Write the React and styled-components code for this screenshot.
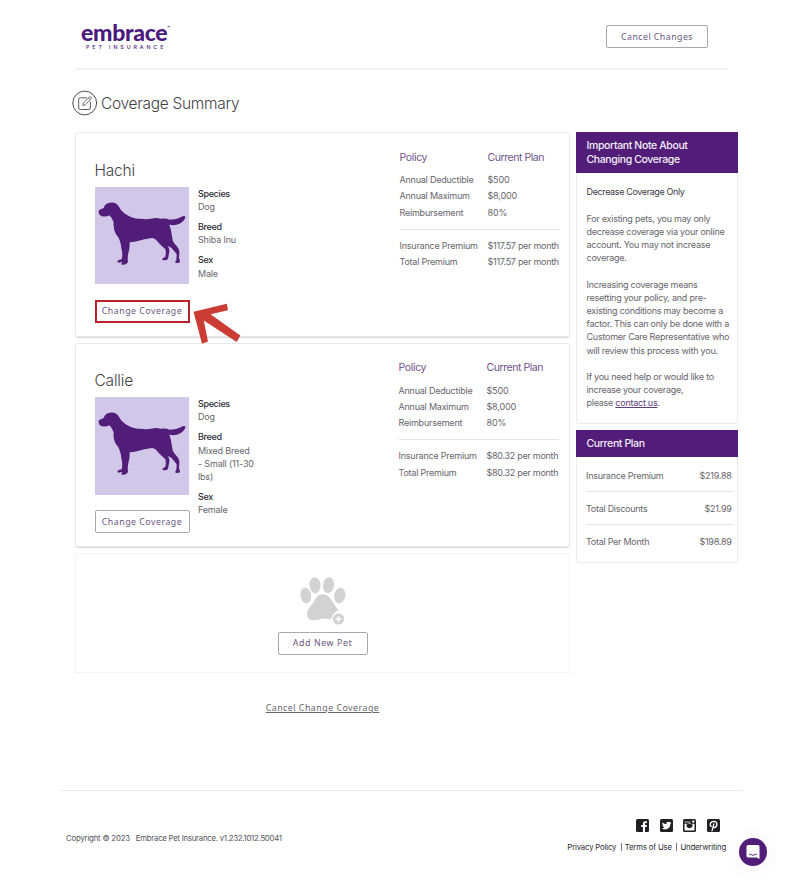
import React from 'react'
import styled, { createGlobalStyle } from 'styled-components'

const GlobalStyle = createGlobalStyle`
  * {
    box-sizing: border-box;
  }

  body {
    margin: 0;
    background: #fff;
    color: #67666b;
    font-family: Inter, "Liberation Sans", sans-serif;
    font-size: 9px;
    font-weight: 370;
    line-height: 13.2px;
    letter-spacing: -0.17px;
  }

  h1, h2, h3, p, dl, dd, dt {
    margin: 0;
    font-weight: inherit;
  }
`

const Page = styled.div`
  position: relative;
  height: 891px;
  overflow: hidden;
`

const Header = styled.header`
  display: flex;
  justify-content: space-between;
  align-items: flex-start;
  width: 653px;
  height: 70px;
  margin-left: 75px;
  padding: 21px 20px 0 6px;
  border-bottom: 2px solid #f3f3f4;
`

const Logo = styled.div`
  display: flex;
  flex-direction: column;
  color: #4b1a7c;
`

const LogoName = styled.div`
  display: flex;
  height: 22px;
  font-family: Lato, sans-serif;
  font-size: 23px;
  font-weight: 900;
  line-height: 22px;
  letter-spacing: -0.3px;

  sup {
    font-size: 4px;
    line-height: 14px;
    letter-spacing: 0;
  }
`

const LogoTag = styled.div`
  padding-left: 5px;
  font-size: 5.3px;
  font-weight: 500;
  line-height: 9px;
  letter-spacing: 2.9px;
`

const Button = styled.button`
  width: ${props => props.$width}px;
  height: 23px;
  flex-shrink: 0;
  margin: 0;
  padding: 1px 0 0;
  border: ${props => props.$marked ? '2px solid #b9222b' : '1px solid #aaa6b2'};
  border-radius: ${props => props.$marked ? 0 : 2}px;
  background: #fff;
  color: #6a5880;
  font-family: "Noto Sans", sans-serif;
  font-size: 8.8px;
  line-height: 1;
  letter-spacing: ${props => props.$spacing || 0.5}px;
  white-space: nowrap;
`

const HeaderButton = styled(Button)`
  margin-top: 4px;
`

const Title = styled.div`
  display: flex;
  align-items: center;
  gap: 3px;
  height: 26px;
  margin: 20px 0 16px 72px;
  color: #434247;

  h1 {
    padding-top: 1px;
    font-size: 15.5px;
    font-weight: 300;
    line-height: 20px;
    letter-spacing: -0.3px;
  }
`

const Main = styled.main`
  display: flex;
  align-items: flex-start;
  gap: 6px;
  margin-left: 75px;
`

const Pets = styled.div`
  display: flex;
  flex-direction: column;
  gap: 6px;
  width: 495px;
`

const Card = styled.section`
  display: flex;
  justify-content: space-between;
  height: 204.5px;
  padding: 17.5px 10px 0 18.5px;
  border: 1px solid #e9e9ea;
  border-radius: 3px;
  box-shadow: 0 1px 1px #d8d8da;
`

const PetSide = styled.div`
  display: flex;
  flex-direction: column;
  width: 170px;

  h2 {
    margin-top: 9px;
    color: #46454a;
    font-size: 15.5px;
    font-weight: 300;
    line-height: 21px;
    letter-spacing: -0.2px;
  }
`

const PetInfo = styled.div`
  display: flex;
  gap: 9px;
  height: 97.5px;
  margin: 6px 0 15.5px;
`

const Portrait = styled.div`
  width: 94px;
  height: 97.5px;
  background: #d1c7e8;

  svg {
    display: block;
  }
`

const Facts = styled.dl`
  display: flex;
  flex-direction: column;
  gap: 7px;
  width: 57px;
  padding-left: 0.5px;

  dt {
    color: #2f2e33;
    font-weight: 450;
    letter-spacing: -0.35px;
  }
`

const Policy = styled.div`
  display: flex;
  flex-direction: column;
  width: ${props => props.$width}px;
  height: 120px;
`

const PolicyRow = styled.div`
  display: grid;
  grid-template-columns: 88px 1fr;
  line-height: 16.2px;
  white-space: nowrap;
  letter-spacing: -0.22px;

  span + span {
    letter-spacing: ${props => props.$spacing || -0.15}px;
  }
`

const PolicyHead = styled(PolicyRow)`
  margin: -1px 0 6.5px;
  color: #6f528a;
  font-size: 10.5px;
  letter-spacing: -0.35px;
`

const Line = styled.div`
  height: 1px;
  margin: ${props => props.$gap}px 0;
  background: #e3e3e5;
`

const AddCard = styled.section`
  display: flex;
  flex-direction: column;
  align-items: center;
  gap: 6px;
  height: 120px;
  padding-top: 21.5px;
  border: 1px solid #f3f3f4;
`

const CancelLink = styled.a`
  align-self: center;
  margin-top: 22.5px;
  font-family: "Noto Sans", sans-serif;
  font-size: 8.8px;
  letter-spacing: 0.5px;
  text-decoration: underline;
`

const Sidebar = styled.aside`
  display: flex;
  flex-direction: column;
  gap: 6px;
  width: 161.5px;
`

const Panel = styled.section`
  height: ${props => props.$height}px;
  border: 1px solid #ededee;
  border-top: 0;
  border-radius: 0 0 3px 3px;

  h3 {
    margin: 0 -1px;
    padding: 6.5px 10.5px 5.5px;
    background: #511d78;
    color: #f4eef9;
    font-size: 10.5px;
    font-weight: 550;
    line-height: 14.6px;
    letter-spacing: -0.37px;
  }
`

const Note = styled.div`
  display: flex;
  flex-direction: column;
  gap: 13.2px;
  padding: 12px 0 0 9.5px;
  white-space: nowrap;
  letter-spacing: -0.25px;

  strong {
    color: #3b3a3f;
    font-weight: 420;
    letter-spacing: -0.37px;
  }

  a {
    color: #60407c;
    text-decoration: underline;
  }
`

const Totals = styled.div`
  padding: 12px 5px 0 9px;
`

const TotalRow = styled.div`
  display: flex;
  justify-content: space-between;
  letter-spacing: -0.27px;
`

const Footer = styled.footer`
  display: flex;
  justify-content: space-between;
  width: 683px;
  margin: 75.5px 0 0 60px;
  padding: 28px 17px 0 6px;
  border-top: 1px solid #ebebec;
  color: #55545a;
  font-size: 7.8px;
  line-height: 12px;
`

const Copyright = styled.div`
  display: flex;
  gap: 6px;
  padding-top: 12.5px;
  letter-spacing: -0.2px;

  span + span {
    letter-spacing: -0.26px;
  }
`

const FooterRight = styled.div`
  display: flex;
  flex-direction: column;
  align-items: flex-end;
  gap: 9px;
`

const Social = styled.div`
  display: flex;
  gap: 10.5px;
  height: 13px;
  padding-right: 6.5px;
`

const Links = styled.div`
  display: flex;
  gap: 4.5px;
  color: #2f2e33;
  white-space: nowrap;
  letter-spacing: -0.19px;

  span + span {
    padding-left: 4px;
    background: linear-gradient(#77767b, #77767b) 0 2px / 1px 8px no-repeat;
  }
`

const Chat = styled.div`
  position: absolute;
  left: 739px;
  top: 838px;
  display: flex;
  align-items: center;
  justify-content: center;
  width: 28px;
  height: 28px;
  border-radius: 50%;
  background: #511d78;
  box-shadow: 0 1px 20px 4px rgba(0, 0, 0, 0.035);
`

const Arrow = styled.svg`
  position: absolute;
  left: 190px;
  top: 300px;
`

const EditIcon = () => (
  <svg width="26" height="26" viewBox="0 0 26 26" fill="none" stroke="#4c4b50">
    <circle cx="12.7" cy="13" r="11.9" strokeWidth="1" />
    <path d="M14.8 7.8H8.2q-1.5 0-1.5 1.5v8.7q0 1.5 1.5 1.5h8.7q1.5 0 1.5-1.5v-6.2" strokeWidth=".9" />
    <path d="M10.8 15.7l.8-2.9 5.6-5.8q.8-.7 1.7.1t.1 1.7l-5.5 5.9zM16.3 8l1.8 1.7" strokeWidth=".8" />
  </svg>
)

const Dog = () => (
  <svg width="94" height="97.5" viewBox="75 185 282 291" preserveAspectRatio="none" fill="#511d78">
    <path d="M86 255Q94 251 101 248Q105 232 124 231Q140 231 147 244Q153 259 174 270Q190 280 213 280Q229 283 251 278Q262 276 272 280Q287 277 299 283Q318 283 332 275Q345 268 346 275Q344 285 330 294Q316 302 298 298Q304 313 306 333Q306 346 315 356Q330 370 328 383L327 397Q332 408 328 411L318 412Q313 409 319 403L320 386Q313 376 304 366L293 361Q301 371 297 383L294 399Q290 405 279 403Q274 400 280 397L286 393Q289 380 286 371Q269 357 257 342Q250 335 241 338Q219 341 201 347Q187 350 179 350Q180 367 175 382Q172 397 174 409Q169 419 155 416Q152 412 158 408L145 411Q139 407 146 403L155 401Q159 387 154 367Q151 339 138 326Q129 310 131 290Q127 277 118 269Q109 275 96 272Q85 270 86 255Z" />
  </svg>
)

const Paw = () => (
  <svg width="50" height="50" viewBox="0 0 50 50" fill="#d2d2d3">
    <ellipse cx="7.8" cy="19.5" rx="5.3" ry="7.8" transform="rotate(-8 7.8 19.5)" />
    <ellipse cx="17" cy="9.2" rx="5.5" ry="8" transform="rotate(-5 17 9.2)" />
    <ellipse cx="30.5" cy="9.2" rx="5.5" ry="8" transform="rotate(8 30.5 9.2)" />
    <ellipse cx="41.8" cy="19.5" rx="5.6" ry="7.8" transform="rotate(10 41.8 19.5)" />
    <path d="M24.7 18.3Q30 18.3 33.5 24.5Q36 28 40.5 34.5Q34.5 36.5 33 43.5Q29 42 24.7 42.6Q17.5 44.8 13 44Q7.5 42 9.500 35Q11 31 15.2 27Q18.5 18.3 24.7 18.3Z" />
    <circle cx="40.5" cy="43" r="5.6" />
    <path d="M40.5 40v6M37.5 43h6" stroke="#fff" strokeWidth="1.5" />
  </svg>
)

const Facebook = () => (
  <svg width="13" height="13" viewBox="0 0 13 13">
    <rect width="13" height="13" rx="1.5" fill="#202024" />
    <path d="M6.9 13V8H5.2V6h1.7V4.6Q6.9 2.2 9.3 2.2h1.6v1.9H9.8Q9 4.1 9 4.9V6h1.900l-.3 2H9v5z" fill="#fff" />
  </svg>
)

const Twitter = () => (
  <svg width="13" height="13" viewBox="0 0 13 13">
    <rect width="13" height="13" rx="1.5" fill="#202024" />
    <path d="M2.4 3.200Q4 5 6.4 5.1Q6.2 2.7 8.3 2.7Q9.2 2.7 9.8 3.3L11 2.9L10.4 4L11.3 3.9L10.5 4.8Q10.4 8.4 7.7 9.8Q4.7 11 2 9.4Q3.7 9.4 4.6 8.6Q3.3 8.3 2.9 7.2H3.7Q2.3 6.5 2.3 5.2L3 5.4Q1.9 4.4 2.4 3.2Z" fill="#fff" />
  </svg>
)

const Instagram = () => (
  <svg width="13" height="13" viewBox="0 0 13 13">
    <rect width="13" height="13" rx="1.5" fill="#202024" />
    <path d="M1.5 4.8H3.7Q2.7 9 6.5 9.2Q10.3 9 9.3 4.8H11.5V10.7Q11.5 11.5 10.7 11.5H2.3Q1.5 11.5 1.5 10.7Z" fill="#fff" />
    <path d="M1.5 3h6" fill="none" stroke="#fff" strokeWidth=".7" />
    <path d="M4.5 5.2Q5.2 4.400 6.5 4.4t2 .8" fill="none" stroke="#fff" strokeWidth=".6" />
    <rect x="9.2" y="1.5" width="2.2" height="2" fill="#fff" />
  </svg>
)

const Pinterest = () => (
  <svg width="13" height="13" viewBox="0 0 13 13">
    <rect width="13" height="13" rx="1.5" fill="#202024" />
    <path d="M4.2 7.5Q2.9 6.6 3.3 4.7Q4 2.4 6.8 2.4Q9.9 2.5 9.9 5.1Q9.7 8.2 7.6 8.5Q6.6 8.6 6.2 7.9M6.9 4.8L5 11.8" fill="none" stroke="#fff" strokeWidth="1.3" strokeLinecap="round" />
  </svg>
)

const pets = [
  {
    name: 'Hachi',
    breed: 'Shiba Inu',
    sex: 'Male',
    premium: '$117.57 per month',
    width: 159.5,
    marked: true
  },
  {
    name: 'Callie',
    breed: 'Mixed Breed - Small (11-30 lbs)',
    sex: 'Female',
    premium: '$80.32 per month',
    width: 160.5,
    marked: false
  }
]

const PetCard = ({ pet }) => (
  <Card>
    <PetSide>
      <h2>{pet.name}</h2>
      <PetInfo>
        <Portrait><Dog /></Portrait>
        <Facts>
          <div><dt>Species</dt><dd>Dog</dd></div>
          <div><dt>Breed</dt><dd>{pet.breed}</dd></div>
          <div><dt>Sex</dt><dd>{pet.sex}</dd></div>
        </Facts>
      </PetInfo>
      <Button $width={95} $marked={pet.marked}>Change Coverage</Button>
    </PetSide>
    <Policy $width={pet.width}>
      <PolicyHead $spacing={-0.45}><span>Policy</span><span>Current Plan</span></PolicyHead>
      <PolicyRow><span>Annual Deductible</span><span>$500</span></PolicyRow>
      <PolicyRow><span>Annual Maximum</span><span>$8,000</span></PolicyRow>
      <PolicyRow><span>Reimbursement</span><span>80%</span></PolicyRow>
      <Line $gap={8} />
      <PolicyRow $spacing={-0.28}><span>Insurance Premium</span><span>{pet.premium}</span></PolicyRow>
      <PolicyRow $spacing={-0.28}><span>Total Premium</span><span>{pet.premium}</span></PolicyRow>
    </Policy>
  </Card>
)

const App = () => {
  return (
    <Page>
      <GlobalStyle />
      <Header>
        <Logo>
          <LogoName>embrace<sup>™</sup></LogoName>
          <LogoTag>PET INSURANCE</LogoTag>
        </Logo>
        <HeaderButton $width={102} $spacing={0.45}>Cancel Changes</HeaderButton>
      </Header>
      <Title>
        <EditIcon />
        <h1>Coverage Summary</h1>
      </Title>
      <Main>
        <Pets>
          {pets.map(pet => <PetCard key={pet.name} pet={pet} />)}
          <AddCard>
            <Paw />
            <Button $width={90} $spacing={0.6}>Add New Pet</Button>
          </AddCard>
          <CancelLink>Cancel Change Coverage</CancelLink>
        </Pets>
        <Sidebar>
          <Panel $height={292}>
            <h3>Important Note About<br />Changing Coverage</h3>
            <Note>
              <strong>Decrease Coverage Only</strong>
              <p>For existing pets, you may only<br />decrease coverage via your online<br />account. You may not increase<br />coverage.</p>
              <p>Increasing coverage means<br />resetting your policy, and pre-<br />existing conditions may become a<br />factor. This can only be done with a<br />Customer Care Representative who<br />will review this process with you.</p>
              <p>If you need help or would like to<br />increase your coverage,<br />please <a>contact us</a>.</p>
            </Note>
          </Panel>
          <Panel $height={132.5}>
            <h3>Current Plan</h3>
            <Totals>
              <TotalRow><span>Insurance Premium</span><span>$219.88</span></TotalRow>
              <Line $gap={9.4} />
              <TotalRow><span>Total Discounts</span><span>$21.99</span></TotalRow>
              <Line $gap={9.4} />
              <TotalRow><span>Total Per Month</span><span>$198.89</span></TotalRow>
            </Totals>
          </Panel>
        </Sidebar>
      </Main>
      <Footer>
        <Copyright>
          <span>Copyright © 2023</span>
          <span>Embrace Pet Insurance. v1.232.1012.50041</span>
        </Copyright>
        <FooterRight>
          <Social>
            <Facebook />
            <Twitter />
            <Instagram />
            <Pinterest />
          </Social>
          <Links>
            <span>Privacy Policy</span>
            <span>Terms of Use</span>
            <span>Underwriting</span>
          </Links>
        </FooterRight>
      </Footer>
      <Arrow width="54" height="48" viewBox="0 0 54 48">
        <path d="M3.5 11.7L36.8 3.8L38 10.2L20.5 14.3L50.3 35.4L46.7 42L13.8 20.5L18 41.5L12 43.8Z" fill="#cb3c34" />
      </Arrow>
      <Chat>
        <svg width="14" height="16" viewBox="0 0 14 16">
          <path d="M2 1h10q1.5 0 1.5 1.5V15l-3-1.6H2Q.5 13.4.5 12V2.5Q.5 1 2 1Z" fill="#fff" />
          <path d="M3 10q4 2.6 8 0" fill="none" stroke="#511d78" strokeWidth=".9" />
        </svg>
      </Chat>
    </Page>
  )
}

export default App
